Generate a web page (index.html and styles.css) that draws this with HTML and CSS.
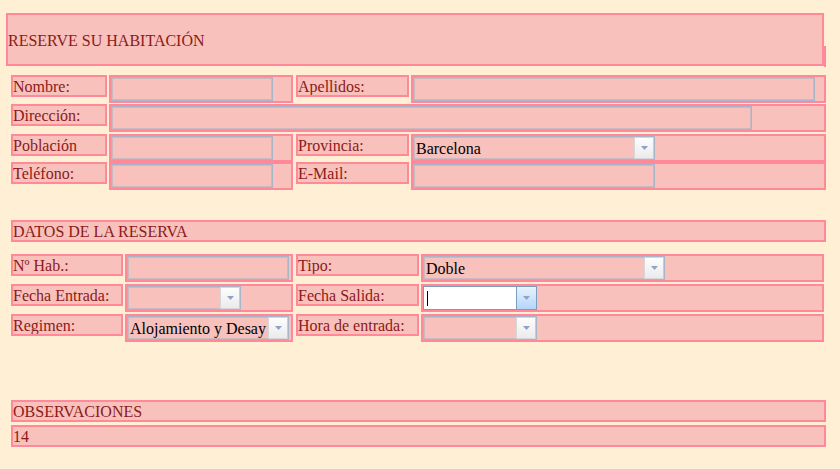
FILE: index.html
```html
<!DOCTYPE html>
<html lang="es">
<head>
<meta charset="utf-8">
<title>Reserve su habitación</title>
<link rel="stylesheet" href="styles.css">
</head>
<body>
<div class="page">
  <div class="title">RESERVE SU HABITACIÓN</div>

  <div class="sec1">
    <div class="row r1">
      <div class="lab l1">Nombre:</div>
      <div class="cell c1"><input class="in w162" type="text"></div>
      <div class="lab l2">Apellidos:</div>
      <div class="cell c2"><input class="in w402" type="text"></div>
    </div>
    <div class="row r2">
      <div class="lab l1">Dirección:</div>
      <div class="cell cwide"><input class="in w641" type="text"></div>
    </div>
    <div class="row r3">
      <div class="lab l1">Población</div>
      <div class="cell c1"><input class="in w162" type="text"></div>
      <div class="lab l2">Provincia:</div>
      <div class="cell c2">
        <div class="sel w242"><span class="val">Barcelona</span><span class="btn"><svg width="7" height="4" viewBox="0 0 7 4"><path d="M0 0h7L3.5 4z" fill="#8ea2cb"/></svg></span></div>
      </div>
    </div>
    <div class="row r4">
      <div class="lab l1">Teléfono:</div>
      <div class="cell c1"><input class="in w162" type="text"></div>
      <div class="lab l2">E-Mail:</div>
      <div class="cell c2"><input class="in w242" type="text"></div>
    </div>
  </div>

  <div class="bar bar-datos">DATOS DE LA RESERVA</div>

  <div class="sec2">
    <div class="row">
      <div class="lab m1">Nº Hab.:</div>
      <div class="cell d1"><input class="in w162" type="text"></div>
      <div class="lab m2">Tipo:</div>
      <div class="cell d2">
        <div class="sel w242"><span class="val">Doble</span><span class="btn"><svg width="7" height="4" viewBox="0 0 7 4"><path d="M0 0h7L3.5 4z" fill="#8ea2cb"/></svg></span></div>
      </div>
    </div>
    <div class="row">
      <div class="lab m1">Fecha Entrada:</div>
      <div class="cell d1">
        <div class="sel w114"><span class="val"></span><span class="btn"><svg width="7" height="4" viewBox="0 0 7 4"><path d="M0 0h7L3.5 4z" fill="#8ea2cb"/></svg></span></div>
      </div>
      <div class="lab m2">Fecha Salida:</div>
      <div class="cell d2">
        <div class="sel w114 focus"><span class="val"><span class="caret"></span></span><span class="btn"><svg width="7" height="4" viewBox="0 0 7 4"><path d="M0 0h7L3.5 4z" fill="#8ea2cb"/></svg></span></div>
      </div>
    </div>
    <div class="row">
      <div class="lab m1">Regimen:</div>
      <div class="cell d1">
        <div class="sel w162"><span class="val">Alojamiento y Desay</span><span class="btn"><svg width="7" height="4" viewBox="0 0 7 4"><path d="M0 0h7L3.5 4z" fill="#8ea2cb"/></svg></span></div>
      </div>
      <div class="lab m2">Hora de entrada:</div>
      <div class="cell d2">
        <div class="sel w114"><span class="val"></span><span class="btn"><svg width="7" height="4" viewBox="0 0 7 4"><path d="M0 0h7L3.5 4z" fill="#8ea2cb"/></svg></span></div>
      </div>
    </div>
  </div>

  <div class="bar bar-obs">OBSERVACIONES</div>
  <div class="bar bar-num">14</div>
</div>
</body>
</html>
```

FILE: styles.css
```css
html, body {
  margin: 0;
  padding: 0;
  background: #ffefd5;
}

body {
  font-family: "Liberation Serif", "Times New Roman", serif;
  font-size: 16px;
  color: #8b1a1a;
}

.page {
  padding-top: 13px;
}

.title {
  position: relative;
  box-sizing: border-box;
  margin-left: 6px;
  width: 818px;
  height: 53px;
  padding-top: 2px;
  border: 2px solid #ff8899;
  background: #f8c1bb;
  display: flex;
  align-items: center;
  line-height: 18px;
}

.title::after {
  content: "";
  position: absolute;
  right: -4px;
  bottom: -3px;
  width: 2px;
  height: 21px;
  background: #ff8899;
}

.sec1 {
  margin: 9px 0 0 11px;
  width: 815px;
}

.sec2 {
  margin: 12px 0 0 11px;
  width: 813px;
}

.row {
  display: flex;
  align-items: flex-start;
}

.r1 { margin-bottom: 1px; }
.r2 { margin-bottom: 2px; }
.r3 { margin-bottom: 0; }
.sec2 .row { margin-bottom: 2px; }

.lab {
  box-sizing: border-box;
  height: 22px;
  padding-top: 1px;
  border: 2px solid #ff8899;
  background: #f8c1bb;
  line-height: 18px;
  white-space: nowrap;
  overflow: hidden;
}

.cell {
  box-sizing: border-box;
  height: 28px;
  border: 2px solid #ff8899;
  background: #f8c1bb;
  margin-left: 2px;
}

.l1 { width: 96px; }
.l2 { width: 113px; margin-left: 3px; }
.c1 { width: 184px; }
.c2 { flex: 1; }
.cwide { flex: 1; }

.m1 { width: 112px; }
.m2 { width: 123px; margin-left: 3px; }
.d1 { width: 168px; }
.d2 { flex: 1; }

.in {
  display: block;
  box-sizing: border-box;
  height: 24px;
  margin: 0;
  padding: 0 2px;
  border: 1px solid #a9b5c8;
  box-shadow: inset 0 0 0 1px #c9b9c0;
  background: transparent;
  font: inherit;
  outline: none;
}

.w114 { width: 114px; }
.w162 { width: 162px; }
.w242 { width: 242px; }
.w402 { width: 402px; }
.w641 { width: 641px; }

.sel {
  box-sizing: border-box;
  height: 24px;
  display: flex;
  border: 1px solid #a9b5c8;
  box-shadow: inset 0 0 0 1px #c9b9c0;
  color: #000;
  overflow: hidden;
}

.sel .val {
  flex: 1;
  min-width: 0;
  padding-left: 2px;
  padding-top: 1px;
  line-height: 21px;
  white-space: nowrap;
  overflow: hidden;
  display: flex;
  align-items: center;
}

.sel .btn {
  box-sizing: border-box;
  flex: 0 0 20px;
  height: 22px;
  display: flex;
  align-items: center;
  justify-content: center;
  background: linear-gradient(#fdfdfd, #ebebeb);
  border: 1px solid #d6d6dc;
  border-right-color: #c8ccd6;
}

.sel.focus {
  background: #fff;
  border-color: #7b9ebf;
  box-shadow: none;
}

.sel.focus .btn {
  background: linear-gradient(#e8f3fd, #b4d6fa);
  border: none;
  border-left: 1px solid #7b9ebf;
  height: 22px;
}

.caret {
  display: block;
  width: 1px;
  height: 15px;
  margin-left: 1px;
  background: #000;
}

.bar {
  box-sizing: border-box;
  margin-left: 11px;
  width: 815px;
  height: 22px;
  padding-top: 1px;
  border: 2px solid #ff8899;
  background: #f8c1bb;
  line-height: 18px;
}

.bar-datos { margin-top: 30px; }
.bar-obs { margin-top: 58px; }
.bar-num { margin-top: 3px; }
```
